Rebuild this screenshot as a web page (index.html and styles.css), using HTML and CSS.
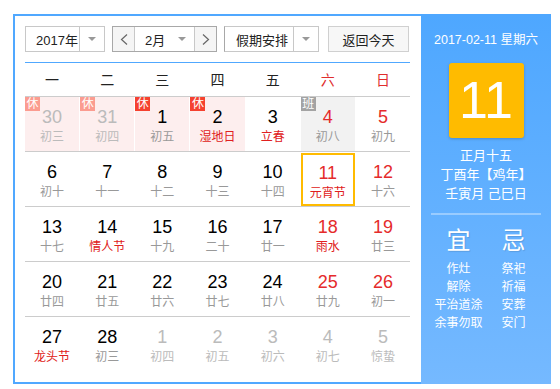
FILE: index.html
```html
<!DOCTYPE html>
<html lang="zh-CN">
<head>
<meta charset="utf-8">
<title>万年历</title>
<link rel="stylesheet" href="styles.css">
</head>
<body>
<div class="cal">
  <div class="main">
    <div class="toolbar">
      <div class="sel sel-year"><span class="sel-text">2017年</span><span class="sel-arrow"><i class="tri"></i></span></div>
      <div class="sel sel-month">
        <span class="nav"><svg width="8" height="11" viewBox="0 0 8 11"><polyline points="7,0.5 1.5,5.5 7,10.5" fill="none" stroke="#666" stroke-width="1.2"/></svg></span>
        <span class="sel-text month-text">2月</span><span class="sel-arrow plain"><i class="tri"></i></span>
        <span class="nav nav-next"><svg width="8" height="11" viewBox="0 0 8 11"><polyline points="1,0.5 6.5,5.5 1,10.5" fill="none" stroke="#666" stroke-width="1.2"/></svg></span>
      </div>
      <div class="sel sel-holiday"><span class="sel-text">假期安排</span><span class="sel-arrow"><i class="tri"></i></span></div>
      <div class="btn-today">返回今天</div>
    </div>
    <div class="rule"></div>
    <div class="weekdays">
      <span>一</span><span>二</span><span>三</span><span>四</span><span>五</span><span class="red">六</span><span class="red">日</span>
    </div>
    <div class="week">
      <div class="day rest other"><i class="badge badge-rest-light">休</i><b>30</b><em>初三</em></div>
      <div class="day rest other"><i class="badge badge-rest-light">休</i><b>31</b><em>初四</em></div>
      <div class="day rest"><i class="badge badge-rest">休</i><b>1</b><em>初五</em></div>
      <div class="day rest"><i class="badge badge-rest">休</i><b>2</b><em class="fest">湿地日</em></div>
      <div class="day"><b>3</b><em class="fest">立春</em></div>
      <div class="day work wkend"><i class="badge badge-work">班</i><b>4</b><em>初八</em></div>
      <div class="day wkend"><b>5</b><em>初九</em></div>
    </div>
    <div class="week">
      <div class="day"><b>6</b><em>初十</em></div>
      <div class="day"><b>7</b><em>十一</em></div>
      <div class="day"><b>8</b><em>十二</em></div>
      <div class="day"><b>9</b><em>十三</em></div>
      <div class="day"><b>10</b><em>十四</em></div>
      <div class="day wkend today"><b>11</b><em class="fest">元宵节</em></div>
      <div class="day wkend"><b>12</b><em>十六</em></div>
    </div>
    <div class="week">
      <div class="day"><b>13</b><em>十七</em></div>
      <div class="day"><b>14</b><em class="fest">情人节</em></div>
      <div class="day"><b>15</b><em>十九</em></div>
      <div class="day"><b>16</b><em>二十</em></div>
      <div class="day"><b>17</b><em>廿一</em></div>
      <div class="day wkend"><b>18</b><em class="fest">雨水</em></div>
      <div class="day wkend"><b>19</b><em>廿三</em></div>
    </div>
    <div class="week">
      <div class="day"><b>20</b><em>廿四</em></div>
      <div class="day"><b>21</b><em>廿五</em></div>
      <div class="day"><b>22</b><em>廿六</em></div>
      <div class="day"><b>23</b><em>廿七</em></div>
      <div class="day"><b>24</b><em>廿八</em></div>
      <div class="day wkend"><b>25</b><em>廿九</em></div>
      <div class="day wkend"><b>26</b><em>初一</em></div>
    </div>
    <div class="week">
      <div class="day"><b>27</b><em class="fest">龙头节</em></div>
      <div class="day"><b>28</b><em>初三</em></div>
      <div class="day other"><b>1</b><em>初四</em></div>
      <div class="day other"><b>2</b><em>初五</em></div>
      <div class="day other"><b>3</b><em>初六</em></div>
      <div class="day other"><b>4</b><em>初七</em></div>
      <div class="day other"><b>5</b><em>惊蛰</em></div>
    </div>
  </div>
  <div class="side">
    <div class="side-date">2017-02-11 星期六</div>
    <div class="big-day">11</div>
    <div class="lunar">
      <div>正月十五</div>
      <div>丁酉年【鸡年】</div>
      <div>壬寅月 己巳日</div>
    </div>
    <div class="side-rule"></div>
    <div class="yiji">
      <div class="yiji-col">
        <div class="yiji-title">宜</div>
        <div class="yiji-item">作灶</div>
        <div class="yiji-item">解除</div>
        <div class="yiji-item">平治道涂</div>
        <div class="yiji-item">余事勿取</div>
      </div>
      <div class="yiji-col">
        <div class="yiji-title">忌</div>
        <div class="yiji-item">祭祀</div>
        <div class="yiji-item">祈福</div>
        <div class="yiji-item">安葬</div>
        <div class="yiji-item">安门</div>
      </div>
    </div>
  </div>
</div>
</body>
</html>
```

FILE: styles.css
```css
* { box-sizing: border-box; }
html, body { margin: 0; padding: 0; background: #fff; }
body {
  font-family: "Liberation Sans", Arial, "Noto Sans CJK SC", sans-serif;
  color: #333;
}
.cal {
  margin: 14px 0 0 13px;
  width: 538px;
  height: 370px;
  display: flex;
  border: 2px solid #50a8ff;
  border-right: none;
}
.main {
  width: 406px;
  padding: 10px 11px 0 10px;
}
.toolbar {
  display: flex;
  height: 26px;
  font-size: 13px;
}
.sel {
  display: flex;
  height: 26px;
  border: 1px solid #c8c8c8;
  background: #fff;
  align-items: stretch;
}
.sel-text {
  display: flex;
  align-items: center;
  padding-left: 10px;
  flex: 1;
  color: #222;
}
.sel-arrow {
  width: 25px;
  border-left: 1px solid #c8c8c8;
  display: flex;
  align-items: center;
  justify-content: center;
}
.sel-arrow.plain { border-left: none; width: 24px; }
.tri {
  display: block;
  width: 0; height: 0;
  border-left: 4px solid transparent;
  border-right: 4px solid transparent;
  border-top: 4px solid #999;
}
.sel-year { width: 80px; }
.sel-month { width: 105px; margin-left: 7px; border-color: #a8a8a8; }
.nav {
  width: 22px;
  background: #f5f5f5;
  border-right: 1px solid #c8c8c8;
  display: flex;
  align-items: center;
  justify-content: center;
}
.nav-next { border-right: none; border-left: 1px solid #c8c8c8; }
.month-text { padding-left: 10px; }
.sel-holiday { width: 95px; margin-left: 7px; border-left-color: #a8a8a8; }
.sel-holiday .sel-text { padding-left: 11px; }
.btn-today {
  width: 81px;
  margin-left: 9px;
  height: 26px;
  border: 1px solid #d0d0d0;
  background: #f7f7f7;
  color: #222;
  display: flex;
  align-items: center;
  justify-content: center;
}
.rule {
  margin-top: 10px;
  height: 1px;
  background: #50a8ff;
}
.weekdays {
  display: grid;
  grid-template-columns: repeat(7, 1fr);
  column-gap: 1px;
  height: 33px;
  align-items: center;
  text-align: center;
  font-size: 14px;
  color: #222;
}
.weekdays span { line-height: 18px; padding-top: 1px; }
.red { color: #e02d2d; }
.week {
  display: grid;
  grid-template-columns: repeat(7, 1fr);
  column-gap: 1px;
  border-top: 1px solid #cccccc;
  height: 55px;
}
.day {
  position: relative;
  display: flex;
  flex-direction: column;
  align-items: center;
  padding-top: 9px;
  height: 54px;
}
.day b {
  font-weight: normal;
  font-size: 18px;
  line-height: 22px;
  color: #000;
}
.day em {
  font-style: normal;
  font-size: 12px;
  line-height: 16px;
  margin-top: 1px;
  color: #999;
}
.day.wkend b { color: #e52b2b; }
.day em.fest { color: #e02020; }
.day.other b, .day.other em { color: #bbbbbb; }
.day.rest { background: #fdeeee; }
.day.work { background: #f2f2f2; }
.day.today {
  border: 2px solid #ffbb00;
  padding-top: 7px;
  height: 53px;
  margin-top: 1px;
}
.badge {
  position: absolute;
  left: 0;
  top: 0;
  width: 15px;
  height: 14px;
  font-style: normal;
  font-size: 12px;
  line-height: 14px;
  text-align: center;
  color: #fff;
}
.badge-rest-light { background: #fb9c90; }
.badge-rest { background: #f5412f; }
.badge-work { background: #a3a3a3; }

.side {
  width: 130px;
  margin-top: -2px;
  margin-bottom: -2px;
  background: linear-gradient(180deg, #4ea7ff 0%, #75b9ff 100%);
  color: #fff;
  display: flex;
  flex-direction: column;
  align-items: center;
  padding-top: 18px;
}
.side-date {
  font-size: 12.5px;
  line-height: 16px;
}
.big-day {
  margin-top: 15px;
  width: 75px;
  height: 75px;
  background: #ffbb00;
  border-radius: 3px;
  box-shadow: 0 1px 3px rgba(0, 0, 0, 0.2);
  font-size: 52px;
  line-height: 75px;
  text-align: center;
  color: #fff;
}
.lunar {
  margin-top: 8px;
  font-size: 13px;
  line-height: 19px;
  text-align: center;
}
.side-rule {
  margin-top: 10px;
  width: 110px;
  height: 2px;
  background: rgba(255, 255, 255, 0.35);
}
.yiji {
  display: flex;
  width: 110px;
  margin-top: 12px;
}
.yiji-col {
  flex: 1;
  display: flex;
  flex-direction: column;
  align-items: center;
}
.yiji-col + .yiji-col { margin-left: 0; }
.yiji-title {
  font-size: 24px;
  line-height: 28px;
  margin-bottom: 5px;
  text-shadow: 1px 1px 1px rgba(0, 0, 0, 0.12);
}
.yiji-item {
  font-size: 12px;
  line-height: 18px;
  white-space: nowrap;
}
```
